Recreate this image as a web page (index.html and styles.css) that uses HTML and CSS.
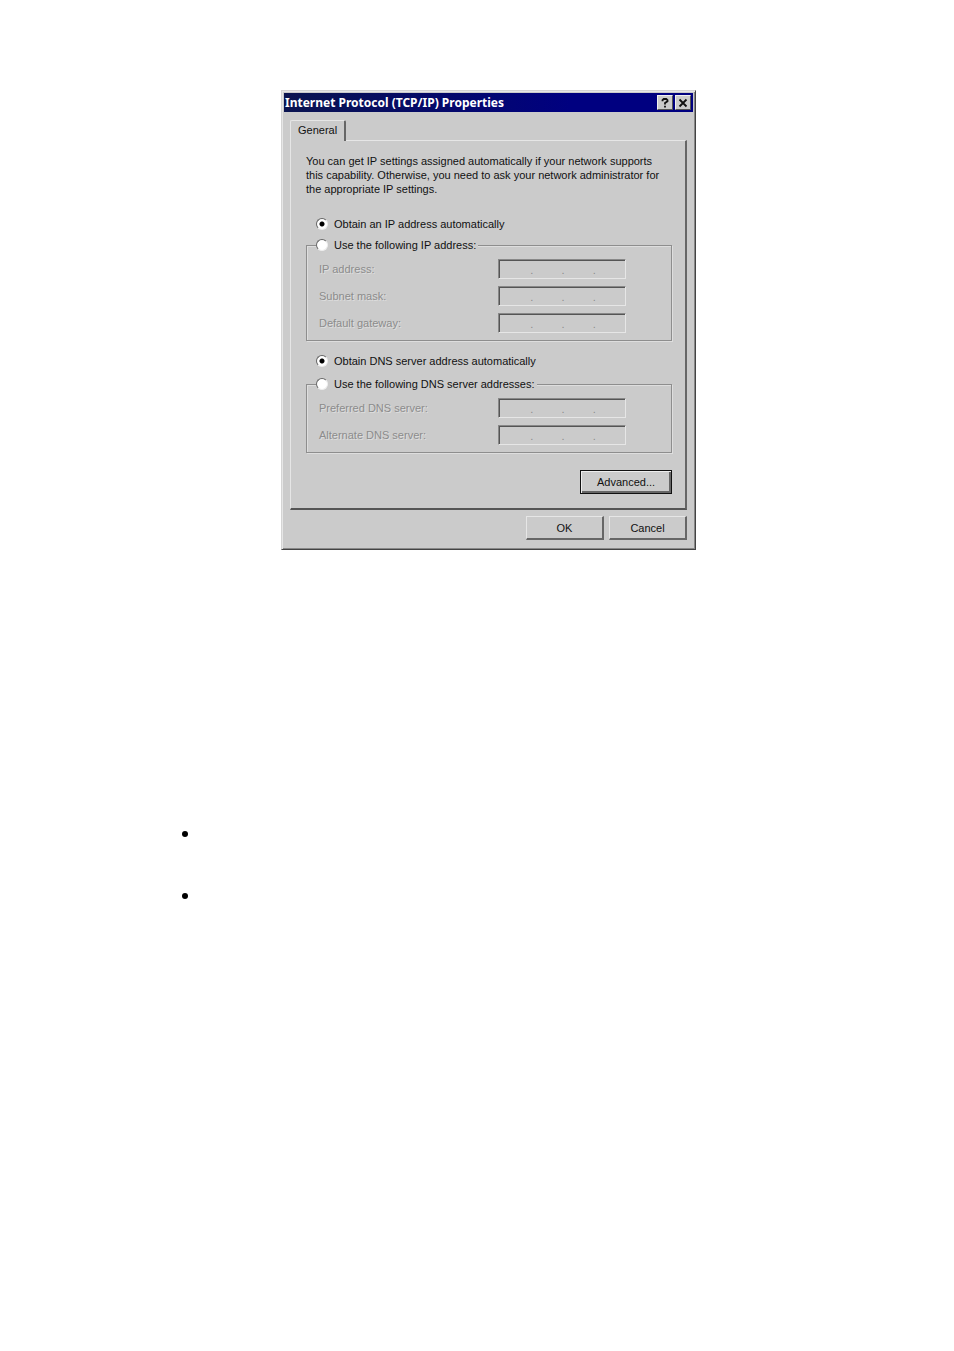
FILE: index.html
```html
<!DOCTYPE html>
<html lang="en">
<head>
  <meta charset="UTF-8" />
  <meta name="viewport" content="width=device-width, initial-scale=1.0" />
  <title>Internet Protocol (TCP/IP) Properties</title>
  <link rel="stylesheet" href="styles.css">
</head>
<body>
  <main class="page">
    <form class="dialog">
      <div class="title-bar">
        <h1>Internet Protocol (TCP/IP) Properties</h1>
        <div class="title-buttons">
          <button type="button" class="title-button" aria-label="Help">
            <svg width="12" height="10" viewBox="0 0 12 10"><path d="M3.5 3.2V2.2L4.7 1h2.6l1.2 1.2v1L6 5v1.6M6 7.8v1.8" fill="none" stroke="#111" stroke-width="1.8"/></svg>
          </button>
          <button type="button" class="title-button" aria-label="Close">
            <svg width="12" height="10" viewBox="0 0 12 10"><path d="M2.5 1.5l7 7M9.5 1.5l-7 7" fill="none" stroke="#111" stroke-width="1.8"/></svg>
          </button>
        </div>
      </div>

      <div class="dialog-body">
        <button type="button" class="tab">General</button>

        <div class="panel">
          <p class="intro">You can get IP settings assigned automatically if your network supports this capability. Otherwise, you need to ask your network administrator for the appropriate IP settings.</p>

          <label class="choice"><input type="radio" name="ip" checked />Obtain an IP address automatically</label>
          <fieldset>
            <legend><label class="choice"><input type="radio" name="ip" />Use the following IP address:</label></legend>
            <div class="row">
              <label for="ip-address">IP address:</label>
              <div class="ip-field">
                <input id="ip-address" disabled /><span>.</span><input aria-label="IP address part 2" disabled /><span>.</span><input aria-label="IP address part 3" disabled /><span>.</span><input aria-label="IP address part 4" disabled />
              </div>
            </div>
            <div class="row">
              <label for="subnet-mask">Subnet mask:</label>
              <div class="ip-field">
                <input id="subnet-mask" disabled /><span>.</span><input aria-label="Subnet mask part 2" disabled /><span>.</span><input aria-label="Subnet mask part 3" disabled /><span>.</span><input aria-label="Subnet mask part 4" disabled />
              </div>
            </div>
            <div class="row">
              <label for="gateway">Default gateway:</label>
              <div class="ip-field">
                <input id="gateway" disabled /><span>.</span><input aria-label="Default gateway part 2" disabled /><span>.</span><input aria-label="Default gateway part 3" disabled /><span>.</span><input aria-label="Default gateway part 4" disabled />
              </div>
            </div>
          </fieldset>

          <label class="choice dns-choice"><input type="radio" name="dns" checked />Obtain DNS server address automatically</label>
          <fieldset>
            <legend><label class="choice"><input type="radio" name="dns" />Use the following DNS server addresses:</label></legend>
            <div class="row">
              <label for="preferred-dns">Preferred DNS server:</label>
              <div class="ip-field">
                <input id="preferred-dns" disabled /><span>.</span><input aria-label="Preferred DNS part 2" disabled /><span>.</span><input aria-label="Preferred DNS part 3" disabled /><span>.</span><input aria-label="Preferred DNS part 4" disabled />
              </div>
            </div>
            <div class="row">
              <label for="alternate-dns">Alternate DNS server:</label>
              <div class="ip-field">
                <input id="alternate-dns" disabled /><span>.</span><input aria-label="Alternate DNS part 2" disabled /><span>.</span><input aria-label="Alternate DNS part 3" disabled /><span>.</span><input aria-label="Alternate DNS part 4" disabled />
              </div>
            </div>
          </fieldset>

          <div class="panel-actions">
            <button type="button" class="button button-default">Advanced...</button>
          </div>
        </div>

        <div class="dialog-actions">
          <button type="submit" class="button">OK</button>
          <button type="button" class="button">Cancel</button>
        </div>
      </div>
    </form>

    <ul class="notes">
      <li></li>
      <li></li>
    </ul>
  </main>
</body>
</html>
```
FILE: styles.css
```css
* {
  box-sizing: border-box;
}
body {
  margin: 0;
  background: #fff;
  color: #111;
  font-family: "Liberation Sans", Arial, sans-serif;
  font-size: 11px;
  line-height: 14px;
}
.page {
  padding: 90px 152px 40px 175px;
}
button, input {
  font: inherit;
  color: inherit;
}

/* Dialog window */
.dialog {
  max-width: 415px;
  margin: 0 auto;
  padding: 1px;
  background: #cbcbcb;
  border: 1px solid #d4d4d4;
  border-right-color: #444;
  border-bottom-color: #444;
  box-shadow: inset 1px 1px #e6e6e6, inset -1px -1px #888;
}
.title-bar {
  display: flex;
  align-items: center;
  justify-content: space-between;
  height: 19px;
  margin: 1px;
  padding: 0 2px 0 1px;
  background: linear-gradient(to right, #0a1450, #000080 70%);
  color: #fff;
}
.title-bar h1 {
  margin: 0;
  font-family: "Noto Sans", "DejaVu Sans", sans-serif;
  font-size: 12px;
  font-weight: bold;
}
.title-buttons {
  display: flex;
  gap: 2px;
}
.title-button {
  display: flex;
  align-items: center;
  justify-content: center;
  width: 16px;
  height: 15px;
  padding: 0;
  background: #cbcbcb;
  border: 1px solid #f0f0f0;
  border-right-color: #555;
  border-bottom-color: #555;
}
.dialog-body {
  padding: 7px 7px 8px;
}

/* Tab and its panel */
.tab {
  display: block;
  position: relative;
  height: 21px;
  padding: 0 7px 2px;
  background: #cbcbcb;
  border: 1px solid #e6e6e6;
  border-right: 2px solid #666;
  border-bottom: 0;
  border-radius: 2px 2px 0 0;
}
.panel {
  margin-top: -1px;
  padding: 13px 13px 14px 15px;
  border: 1px solid #e6e6e6;
  border-right: 2px solid #666;
  border-bottom: 2px solid #555;
}
.intro {
  margin: 0 0 21px;
}
.choice {
  display: flex;
  align-items: center;
  gap: 6px;
}
.panel > .choice {
  margin: 0 0 7px 10px;
}
.panel > .dns-choice {
  margin: 13px 0 9px 10px;
}
.choice input {
  appearance: none;
  width: 12px;
  height: 12px;
  margin: 0;
  background: #fff;
  border: 1px solid #666;
  border-right-color: #eee;
  border-bottom-color: #eee;
  border-radius: 50%;
}
.choice input:checked {
  background: radial-gradient(circle, #000 2px, #fff 3px);
}

fieldset {
  display: flex;
  flex-direction: column;
  gap: 7px;
  min-width: 0;
  margin: 0;
  padding: 7px 45px 7px 12px;
  border: 1px solid #8e8e8e;
  box-shadow: 1px 1px #dedede, inset 1px 1px #dedede;
}
legend {
  margin-left: -3px;
  padding: 0 2px 0 0;
  background: #cbcbcb;
}
.row {
  display: flex;
  align-items: center;
  justify-content: space-between;
  color: #8c8c8c;
  text-shadow: 1px 1px #dedede;
}
.ip-field {
  display: flex;
  width: 128px;
  height: 20px;
  padding: 0 1px 0 3px;
  border: 1px solid #888;
  border-right-color: #e6e6e6;
  border-bottom-color: #e6e6e6;
  box-shadow: inset 1px 1px #555;
}
.ip-field input {
  flex: 1;
  min-width: 0;
  padding: 0;
  background: none;
  border: 0;
  text-align: center;
}
.ip-field span {
  width: 3px;
  line-height: 20px;
  text-shadow: none;
}

/* Push buttons */
.button {
  width: 78px;
  height: 24px;
  padding: 0;
  background: #cbcbcb;
  border: 1px solid #e6e6e6;
  border-right: 2px solid #666;
  border-bottom: 2px solid #666;
}
.button-default {
  width: 92px;
  border: 1px solid #111;
  box-shadow: inset 1px 1px #eee, inset -2px -2px #666;
}
.panel-actions, .dialog-actions {
  display: flex;
  justify-content: flex-end;
  gap: 5px;
}
.panel-actions {
  margin-top: 17px;
}
.dialog-actions {
  margin-top: 6px;
}

/* Bulleted notes under the dialog */
.notes {
  margin: 253px 0 0;
  padding: 0 0 0 7px;
  list-style: none;
}
.notes li {
  height: 62px;
  padding-top: 28px;
}
.notes li::before {
  content: "";
  display: block;
  width: 6px;
  height: 6px;
  border-radius: 50%;
  background: #000;
}
```
